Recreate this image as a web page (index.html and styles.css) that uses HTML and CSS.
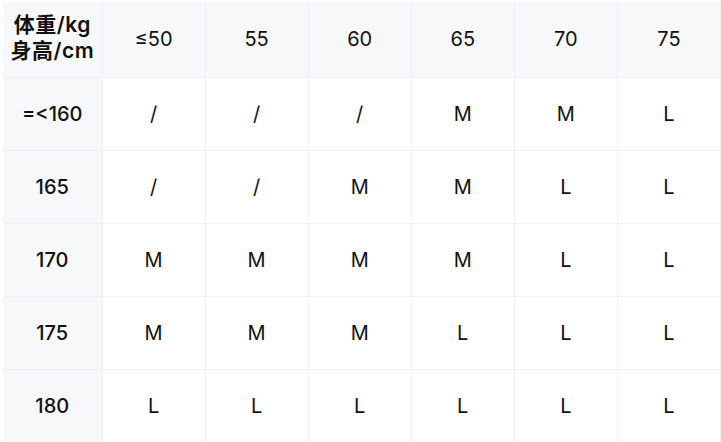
FILE: index.html
```html
<!DOCTYPE html>
<html lang="zh-CN">
<head>
<meta charset="utf-8">
<link rel="stylesheet" href="styles.css">
</head>
<body>
<table class="size-table">
  <colgroup>
    <col class="col-head">
    <col><col><col><col><col><col>
  </colgroup>
  <thead>
    <tr>
      <th class="corner">体重/kg<br>身高/cm</th>
      <th>≤50</th><th>55</th><th>60</th><th>65</th><th>70</th><th>75</th>
    </tr>
  </thead>
  <tbody>
    <tr><th>=&lt;160</th><td>/</td><td>/</td><td>/</td><td>M</td><td>M</td><td>L</td></tr>
    <tr><th>165</th><td>/</td><td>/</td><td>M</td><td>M</td><td>L</td><td>L</td></tr>
    <tr><th>170</th><td>M</td><td>M</td><td>M</td><td>M</td><td>L</td><td>L</td></tr>
    <tr><th>175</th><td>M</td><td>M</td><td>M</td><td>L</td><td>L</td><td>L</td></tr>
    <tr><th>180</th><td>L</td><td>L</td><td>L</td><td>L</td><td>L</td><td>L</td></tr>
  </tbody>
</table>
</body>
</html>
```
FILE: styles.css
```css
html, body {
  margin: 0;
  background: #ffffff;
}
body {
  padding: 2px 0 0 3px;
  font-family: Inter, "Noto Sans CJK SC", sans-serif;
  color: #111111;
}
.size-table {
  border-collapse: collapse;
  table-layout: fixed;
  width: 718px;
}
.col-head {
  width: 99px;
}
.size-table th,
.size-table td {
  padding: 0;
  text-align: center;
  vertical-align: middle;
  border-right: 1px solid #eef0f3;
  border-bottom: 1px solid #eef0f3;
  font-size: 20px;
  line-height: 24px;
}
.size-table thead th {
  font-weight: 400;
}
.size-table tbody th {
  font-weight: 500;
}
.size-table td {
  font-weight: 400;
}
.size-table thead tr {
  height: 75px;
}
.size-table tbody tr {
  height: 73px;
}
.size-table thead th,
.size-table tbody th {
  background: #f7f8fa;
}
.size-table tbody td {
  background: #ffffff;
}
.size-table .corner {
  font-weight: 600;
  font-size: 21px;
  line-height: 26px;
  letter-spacing: 0.5px;
  padding-bottom: 2px;
}
```
